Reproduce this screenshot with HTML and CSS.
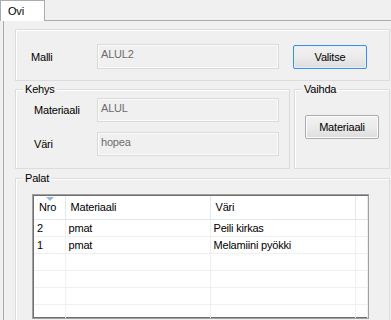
FILE: index.html
```html
<!DOCTYPE html>
<html lang="fi">

<head>
    <meta charset="UTF-8" />
    <meta name="viewport" content="width=device-width, initial-scale=1" />
    <title>Ovi</title>
    <link rel="stylesheet" href="styles.css">
</head>

<body>
    <div class="tabs">
        <div class="tab-strip">
            <div class="tab active">Ovi</div>
        </div>

        <div class="tab-page">
            <div class="group group-malli">
                <span class="label label-malli">Malli</span>
                <div class="field field-tall">ALUL2</div>
                <button class="btn btn-default">Valitse</button>
            </div>

            <div class="group-row">
                <div class="group group-kehys">
                    <span class="legend">Kehys</span>
                    <div class="field-row">
                        <span class="label">Materiaali</span>
                        <div class="field">ALUL</div>
                    </div>
                    <div class="field-row">
                        <span class="label">Väri</span>
                        <div class="field">hopea</div>
                    </div>
                </div>

                <div class="group group-vaihda">
                    <span class="legend">Vaihda</span>
                    <button class="btn">Materiaali</button>
                </div>
            </div>

            <div class="group group-palat">
                <span class="legend">Palat</span>
                <div class="listview">
                    <table>
                        <colgroup>
                            <col class="col-nro">
                            <col class="col-mat">
                            <col class="col-vari">
                            <col class="col-rest">
                        </colgroup>
                        <thead>
                            <tr>
                                <th class="sorted">Nro<span class="sort-arrow"></span></th>
                                <th>Materiaali</th>
                                <th>Väri</th>
                                <th></th>
                            </tr>
                        </thead>
                        <tbody>
                            <tr><td>2</td><td>pmat</td><td>Peili kirkas</td><td></td></tr>
                            <tr><td>1</td><td>pmat</td><td>Melamiini pyökki</td><td></td></tr>
                            <tr><td></td><td></td><td></td><td></td></tr>
                            <tr><td></td><td></td><td></td><td></td></tr>
                            <tr><td></td><td></td><td></td><td></td></tr>
                            <tr><td></td><td></td><td></td><td></td></tr>
                        </tbody>
                    </table>
                </div>
            </div>
        </div>
    </div>
</body>

</html>
```

FILE: styles.css
```css
/* Reset */

* {
    margin: 0;
    padding: 0;
    box-sizing: border-box;
}

body {
    font-family: 'Liberation Sans', Arial, sans-serif;
    font-size: 11px;
    letter-spacing: -0.2px;
    background: #f0f0f0;
    color: #000000;
    width: 391px;
    height: 320px;
    overflow: hidden;
}

/* Tabs */

.tab-strip {
    display: flex;
    height: 20px;
}

.tab {
    width: 45px;
    height: 21px;
    padding: 3px 0 0 7px;
    line-height: 14px;
    background: #ffffff;
    border: 1px solid #acacac;
    border-bottom: none;
    position: relative;
    z-index: 1;
}

.tab-page {
    margin-left: 3px;
    border-top: 1px solid #acacac;
    border-left: 1px solid #acacac;
    padding: 8px 0 0 11px;
    height: 300px;
    overflow: hidden;
}

/* Group boxes */

.group {
    position: relative;
    border: 1px solid #dcdcdc;
    box-shadow: inset 1px 1px 0 #ffffff;
}

.legend {
    position: absolute;
    top: -7px;
    left: 7px;
    padding: 0 2px 0 2px;
    line-height: 13px;
    background: #f0f0f0;
}

.group-malli {
    width: 375px;
    height: 52px;
    display: flex;
    align-items: center;
    padding: 14px 0 11px 15px;
}

.group-row {
    display: flex;
    gap: 4px;
    margin-top: 8px;
}

.group-kehys {
    width: 275px;
    height: 80px;
    padding: 8px 0 0 18px;
    display: flex;
    flex-direction: column;
    gap: 10px;
}

.group-vaihda {
    width: 96px;
    height: 80px;
    padding: 25px 0 0 10px;
}

.group-palat {
    width: 375px;
    height: 160px;
    margin-top: 9px;
    padding: 15px 0 0 16px;
}

/* Labels and fields */

.field-row {
    display: flex;
    align-items: center;
}

.label {
    width: 63px;
}

.label-malli {
    width: 66px;
}

.field {
    width: 182px;
    height: 24px;
    padding: 2px 3px;
    line-height: 14px;
    color: #6d6d6d;
    background: #f0f0f0;
    border: 1px solid #dadada;
    box-shadow: inset 0 0 0 1px #fbfbfb;
}

.field-tall {
    height: 25px;
}

/* Buttons */

.btn {
    width: 74px;
    height: 24px;
    font-family: inherit;
    font-size: 11px;
    letter-spacing: -0.2px;
    color: #000000;
    background: linear-gradient(#f2f2f2, #ebebeb 50%, #dddddd);
    border: 1px solid #acacac;
    border-radius: 2px;
    box-shadow: inset 0 0 0 1px #fcfcfc;
}

.btn-default {
    margin-left: 14px;
    border-color: #3c8ee8;
    box-shadow: inset 0 0 0 1px #e2f0fb;
}

/* List view */

.listview {
    width: 337px;
    height: 125px;
    background: #ffffff;
    border: 1px solid #a0a0a0;
    box-shadow: inset 0 0 0 1px #6e6e6e;
    padding: 1px;
    overflow: hidden;
}

.listview table {
    width: 333px;
    border-collapse: collapse;
    table-layout: fixed;
}

.col-nro { width: 31px; }
.col-mat { width: 145px; }
.col-vari { width: 145px; }
.col-rest { width: 12px; }

.listview th {
    height: 23px;
    padding: 0 0 0 5px;
    text-align: left;
    font-weight: normal;
    border-right: 1px solid #e3e8f0;
    border-bottom: 1px solid #e3e8f0;
    position: relative;
    white-space: nowrap;
}

.sort-arrow {
    position: absolute;
    top: 1px;
    left: 12px;
    border-left: 4px solid transparent;
    border-right: 4px solid transparent;
    border-top: 4px solid #97b6d9;
}

.listview td {
    height: 17px;
    padding: 0 0 0 3px;
    border-right: 1px solid #f0f0f0;
    border-bottom: 1px solid #f0f0f0;
    white-space: nowrap;
    line-height: 14px;
}
```
